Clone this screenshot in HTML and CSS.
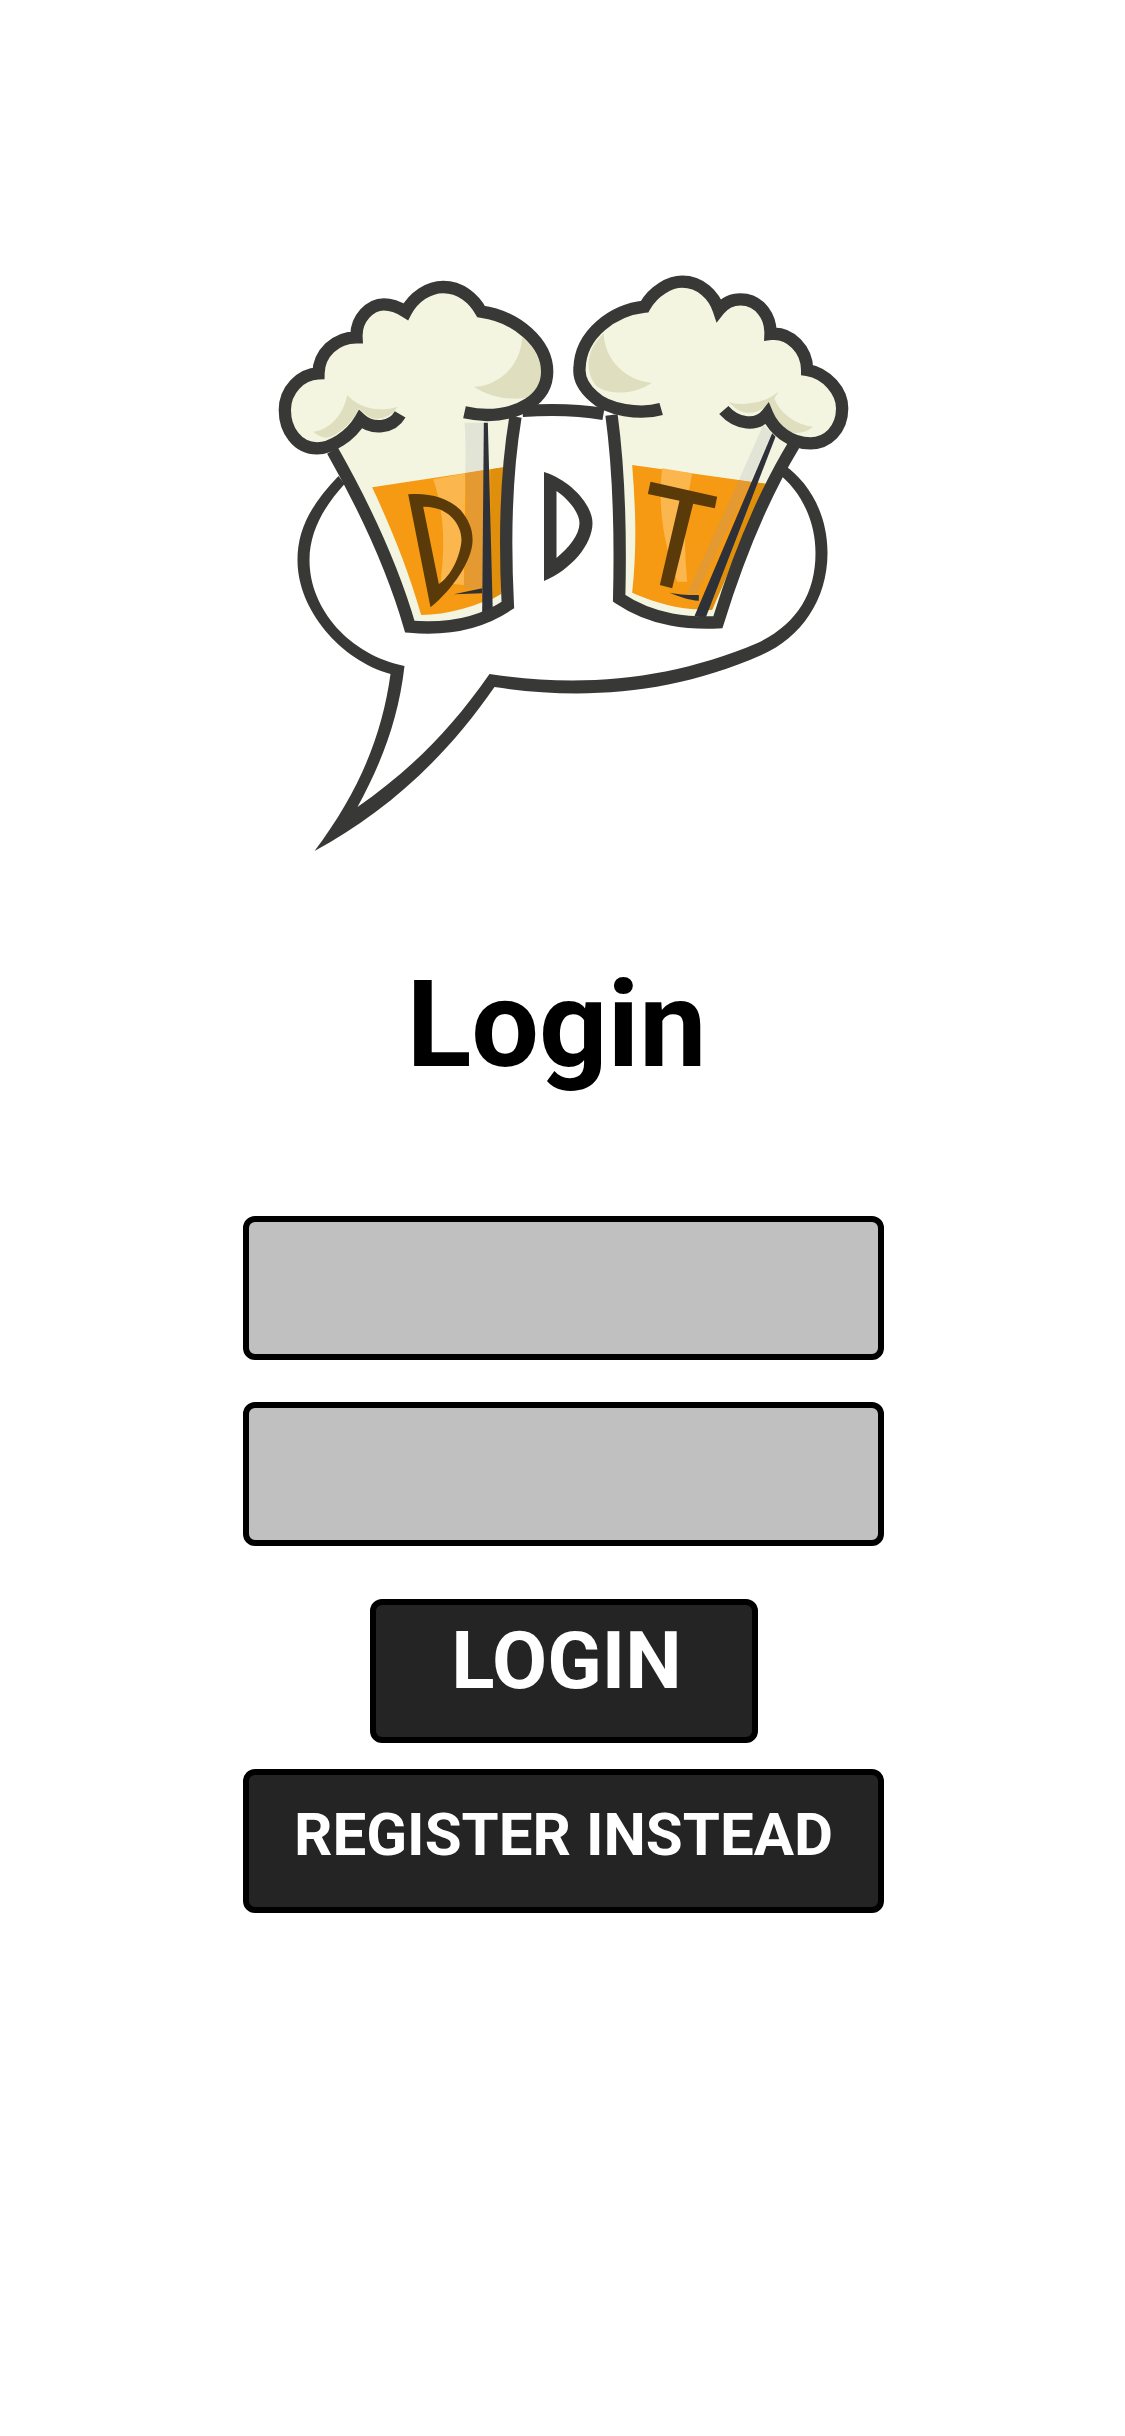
FILE: index.html
```html
<!DOCTYPE html>
<html lang="en">
<head>
    <meta charset="UTF-8">
    <meta name="viewport" content="width=device-width, initial-scale=1.0">
    <title>Login</title>
    <link rel="stylesheet" href="styles.css">
</head>
<body>
    <div class="page">
        <svg class="logo" viewBox="272.5 270 580 590" aria-label="Beer mugs logo">
            <!-- speech bubble -->
            <path class="ink" fill-rule="evenodd" d="M338 476 C310 505 297 530 297 560 C297 610 340 660 390 674 C382 733 360 790 314 851 C380 815 440 765 494 687 C580 700 670 695 761 655 C800 638 827 600 827 553 C827 510 805 480 785 466 L776 472 C800 490 815 520 815 553 C815 595 795 625 757 643 C670 680 580 688 489 674 C450 730 410 770 357 807 C380 765 398 720 404 666 C350 655 309 610 309 560 C309 530 325 505 344 484 Z"/>
            <path class="line" d="M522 411 C550 409 580 410 603 414"/>
            <!-- middle D -->
            <path class="ink" fill-rule="evenodd" d="M543.500 472 C570 480 592 505 592 523 C592 545 570 570 543.500 581 Z M556 491 L556 558 C568 548 579 535 579 523 C579 513 568 499 556 491 Z"/>

            <!-- left mug -->
            <g transform="translate(260 260) scale(0.33333)">
                <path class="glass" d="M216 572 C300 720 390 900 448 1100 C560 1110 660 1090 745 1030 C730 800 740 620 765 470 L700 350 L300 350 Z"/>
                <path class="beer" d="M335 682 L730 622 L722 1000 C650 1040 560 1065 482 1065 C440 920 390 800 335 682 Z"/>
                <path class="beer-dark" d="M690 628 L730 622 L722 1002 L690 1020 Z"/>
                <path class="beer-light" d="M518 658 L615 640 L610 975 L540 968 C555 850 550 750 518 658 Z"/>
                <path class="glare" d="M612 488 L672 488 L670 630 L614 639 C616 590 616 540 612 488 Z"/>
                <path class="glare-beer" d="M614 639 L670 630 L668 985 L610 985 C622 860 620 750 614 639 Z"/>
                <path class="letter" fill-rule="evenodd" d="M443 703 C500 698 560 710 600 750 C625 780 638 810 636 845 C634 900 580 985 510 1042 Z M488 740 L535 972 C570 950 600 890 603 840 C603 790 560 738 488 740 Z"/>
                <path class="navy" d="M580 1003 L665 985 L665 1000 Z"/>
                <path class="navy" d="M670 488 L682 488 L697 1060 L665 1060 Z"/>
                <path class="foam" d="M419 463 C395 505 335 510 300 478 C270 530 210 565 170 565 C110 565 73 510 73 450 C73 390 120 342 174 340 C175 280 225 232 288 232 C285 175 330 133 370 133 C395 133 420 145 436 155 C460 110 505 81 548 81 C600 81 640 115 662 155 C770 170 860 250 860 335 C860 420 770 465 680 465 C660 465 635 462 612 457"/>
                <path class="foam-shade" d="M785 230 C780 330 700 380 640 380 C700 420 770 420 810 412 C835 395 843 360 843 335 C843 300 815 255 785 230 Z"/>
                <path class="foam-shade" d="M158 515 C210 510 250 460 260 405 C290 440 350 460 410 440 C400 465 365 480 335 475 C315 465 305 455 295 445 C275 495 215 540 190 532 C180 530 170 525 158 515 Z"/>
                <path class="outline" d="M216 572 C300 720 390 900 448 1100 C560 1110 660 1090 742 1035 C730 800 740 620 765 470"/>
                <path class="stroke-only" d="M419 463 C395 505 335 510 300 478 C270 530 210 565 170 565 C110 565 73 510 73 450 C73 390 120 342 174 340 C175 280 225 232 288 232 C285 175 330 133 370 133 C395 133 420 145 436 155 C460 110 505 81 548 81 C600 81 640 115 662 155 C770 170 860 250 860 335 C860 420 770 465 680 465 C660 465 635 462 612 457"/>
            </g>

            <!-- right mug -->
            <g transform="translate(540 260) scale(0.33333)">
                <path class="glass" d="M213 465 C238 650 240 850 236 1015 C340 1085 450 1090 532 1087 C590 900 660 720 760 555 L700 350 L300 350 Z"/>
                <path class="beer" d="M275 615 L680 672 L510 1048 L460 1048 C380 1040 320 1018 275 998 C290 860 285 740 275 615 Z"/>
                <path class="beer-dark" d="M640 667 L680 672 L515 1050 L497 1050 Z"/>
                <path class="beer-light" d="M365 625 L455 640 C440 720 425 800 440 965 L410 965 C375 860 350 760 365 625 Z"/>
                <path class="glare" d="M668 495 L695 520 L630 665 L595 660 Z"/>
                <path class="glare-beer" d="M595 660 L630 665 L470 1000 L440 1000 Z"/>
                <path class="letter" d="M330 665 L530 710 L523 745 L458 731 L395 985 L358 975 L417 722 L322 702 Z"/>
                <path class="navy" d="M388 998 C420 1005 450 1005 475 1005 L475 1022 C445 1020 415 1010 388 998 Z"/>
                <path class="navy" d="M695 520 L705 530 L495 1075 L462 1068 Z"/>
                <path class="foam" d="M362 447 C300 465 200 450 160 410 C125 380 115 350 117 325 C120 220 220 150 312 140 C340 90 390 65 425 65 C480 65 520 105 535 150 C555 125 580 118 600 118 C660 118 692 175 690 222 C750 215 800 270 800 330 C860 340 905 395 905 445 C905 510 860 550 810 550 C750 550 700 510 680 462 C650 500 590 495 550 450"/>
                <path class="foam-shade" d="M190 220 C190 300 260 365 335 368 C280 405 210 405 170 380 C140 350 125 280 190 220 Z"/>
                <path class="foam-shade" d="M700 410 C715 460 770 495 818 500 C790 525 745 525 715 500 C700 480 690 450 685 435 Z"/>
                <path class="foam-shade" d="M565 425 C600 440 680 430 715 393 C700 420 690 435 680 435 C650 465 600 470 565 425 Z"/>
                <path class="outline" d="M213 465 C238 650 240 850 236 1015 C340 1085 450 1090 532 1087 C590 900 660 720 760 555"/>
                <path class="stroke-only" d="M362 447 C300 465 200 450 160 410 C125 380 115 350 117 325 C120 220 220 150 312 140 C340 90 390 65 425 65 C480 65 520 105 535 150 C555 125 580 118 600 118 C660 118 692 175 690 222 C750 215 800 270 800 330 C860 340 905 395 905 445 C905 510 860 550 810 550 C750 550 700 510 680 462 C650 500 590 495 550 450"/>
            </g>
        </svg>

        <h1 class="title">Login</h1>

        <form class="form">
            <input class="field" type="text" aria-label="Username">
            <input class="field" type="password" aria-label="Password">
            <button class="btn btn-login" type="button">LOGIN</button>
            <button class="btn btn-register" type="button">REGISTER INSTEAD</button>
        </form>
    </div>
</body>
</html>
```

FILE: styles.css
```css
body {
    margin: 0;
    background-color: #fff;
    font-family: Roboto, "Liberation Sans", sans-serif;
}

.page {
    display: flex;
    flex-direction: column;
    align-items: center;
    min-height: 2436px;
}

.logo {
    display: block;
    width: 580px;
    height: 590px;
    margin-top: 270px;
}

.ink {
    fill: #383836;
}

.line {
    fill: none;
    stroke: #383836;
    stroke-width: 12;
}

.glass {
    fill: #f4f5e1;
}

.beer {
    fill: #f59a12;
}

.beer-dark {
    fill: #e08f0c;
}

.beer-light {
    fill: #fbb74e;
}

.glare {
    fill: #e2e4d6;
}

.glare-beer {
    fill: #e49a30;
}

.letter {
    fill: #5a3a08;
}

.navy {
    fill: #2e3138;
}

.foam {
    fill: #f4f5e1;
}

.foam-shade {
    fill: #dfdfbf;
}

.outline,
.stroke-only {
    fill: none;
    stroke: #383836;
    stroke-width: 37;
    stroke-miterlimit: 2.5;
}

.title {
    margin: 95px 0 0;
    padding-right: 12px;
    font-size: 120px;
    line-height: 140px;
    font-weight: 700;
    color: #000;
}

.form {
    display: flex;
    flex-direction: column;
    align-items: center;
    width: 641px;
    margin-top: 121px;
    padding-left: 2px;
}

.field {
    display: block;
    box-sizing: border-box;
    width: 641px;
    height: 144px;
    margin: 0 0 42px;
    border: 6px solid #000;
    border-radius: 12px;
    background-color: #c0c0c0;
}

.btn {
    box-sizing: border-box;
    height: 144px;
    border: 6px solid #000;
    border-radius: 12px;
    background-color: #242424;
    color: #fff;
    font-family: Roboto, "Liberation Sans", sans-serif;
    font-weight: 700;
}

.btn-login {
    width: 388px;
    margin-top: 11px;
    padding: 0 0 20px 6px;
    font-size: 80px;
}

.btn-register {
    width: 641px;
    margin-top: 26px;
    padding: 0 0 14px;
    font-size: 60px;
}
```
